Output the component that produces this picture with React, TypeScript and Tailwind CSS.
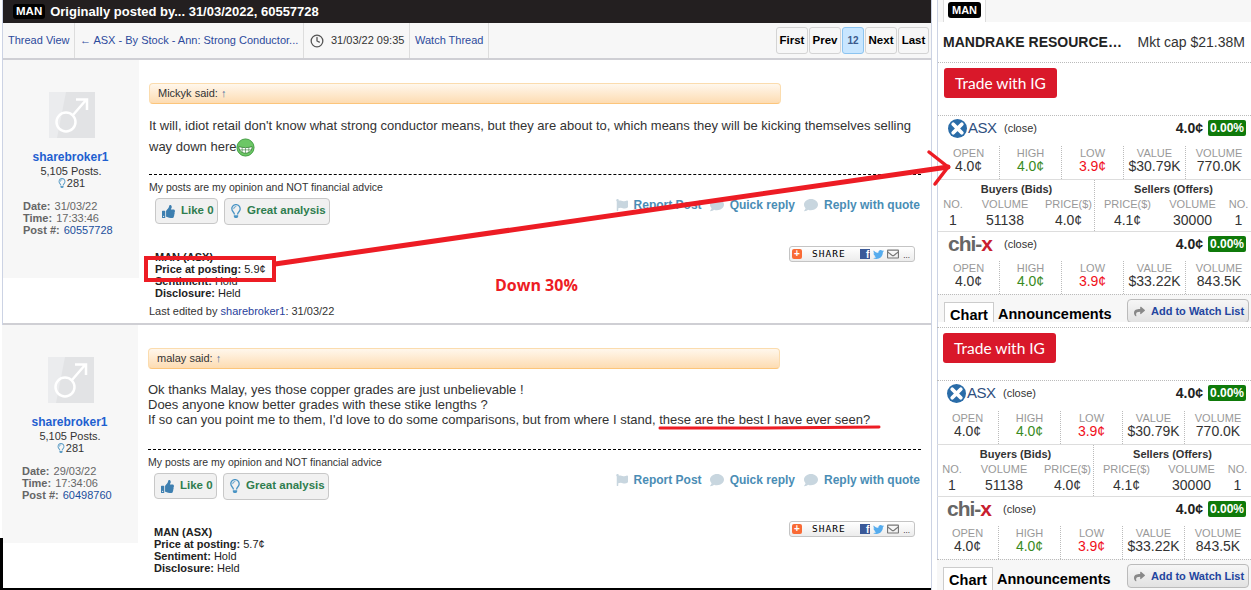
import { FaThumbsUp, FaRegLightbulb, FaFlag, FaComment, FaShare, FaTwitter, FaRegEnvelope } from 'react-icons/fa';
import { Clock } from 'lucide-react';

const arial = "font-['Liberation_Sans',Arial,sans-serif]";

function Avatar() {
  return (
    <svg viewBox="0 0 46 46" className="w-[46px] h-[46px]">
      <rect width="46" height="46" fill="#e2e3e5" />
      <path d="M0 0H17L8 46H0Z" fill="#ebecee" />
      <circle cx="17" cy="30" r="9.5" fill="none" stroke="#fff" strokeWidth="2.5" />
      <path d="M24 23L37 8M27 7.5H38V18" fill="none" stroke="#fff" strokeWidth="2.5" />
    </svg>
  );
}

function ShareBar() {
  return (
    <div className="w-[126px] h-4 flex items-center rounded-[3px] border border-[#c4c4c4] bg-gradient-to-b from-white to-[#ececec] pl-[2px] pr-1">
      <span className="w-[10px] h-[10px] bg-[#f96a35] rounded-[2px] text-white text-[10px] leading-[10px] font-bold text-center">+</span>
      <span className="ml-[10px] text-[9.5px] tracking-[1px] text-black font-['DejaVu_Sans_Mono',monospace]">SHARE</span>
      <span className="ml-auto w-[10px] h-[10px] bg-[#3b5998] text-white text-[10px] leading-[11px] font-bold text-right pr-[1px]">f</span>
      <FaTwitter className="ml-[3px] text-[#55acee] text-[11px]" />
      <FaRegEnvelope className="ml-[3px] text-[#777] text-[12px]" />
      <span className="ml-1 text-[8px] leading-[8px] mt-1 text-black">...</span>
    </div>
  );
}

interface PostProps {
  quoteName: string;
  date: string;
  time: string;
  postNo: string;
  price: string;
  shifted?: boolean;
  body: React.ReactNode;
  edited?: boolean;
}

function Post({ quoteName, date, time, postNo, price, body, edited, shifted }: PostProps) {
  return (
    <div className={`flex ${shifted ? 'h-[264px] -ml-px' : 'h-[265px] border-b-2 border-[#cfcfd4]'}`}>
      <div className="w-[136px] h-[218px] shrink-0 bg-[#f7f7f7] pt-[32px] flex flex-col">
        <div className="ml-[46px]"><Avatar /></div>
        <div className="mt-[12px] text-center pr-[1px] text-[12px] leading-[14px] font-bold text-[#1f5fd0]">sharebroker1</div>
        <div className="mt-[1px] text-center text-[11px] leading-[12px] text-[#333]">5,105 Posts.</div>
        <div className="flex items-center justify-center text-[11px] leading-[12px] text-[#333]">
          <FaRegLightbulb className="text-[#5b9cc5] text-[10px]" />281
        </div>
        <div className="mt-[11px] ml-[20px] text-[11px] leading-[12px] text-[#666] font-bold [&>div]:flex [&>div]:gap-[4px] [&_span]:font-normal">
          <div>Date: <span>{date}</span></div>
          <div>Time: <span>{time}</span></div>
          <div>Post #: <span className="text-[#1b4f9c]">{postNo}</span></div>
        </div>
      </div>
      <div className="flex-1 pl-[10px] pr-[10px] flex flex-col">
        <div className="mt-[23px] w-[632px] h-[21px] rounded-[4px] border border-[#fbdcae] border-b-[#fcc57b] bg-gradient-to-b from-[#fff7ec] to-[#fddcb2] pl-[8px] text-[11px] leading-[19px] text-[#333]">
          {quoteName} said: <span className="text-[#4d6f9c]">↑</span>
        </div>
        {body}
        <div className="border-t border-dashed border-black" />
        <div className="mt-[6px] text-[10.5px] leading-[12px] text-[#333]">My posts are my opinion and NOT financial advice</div>
        <div className="mt-[5px] flex items-center h-[26px]">
          <div className="ml-[6px] w-[63px] h-[26px] rounded-[4px] border border-[#c8c8c8] bg-[#f1f1f1] flex items-center pl-[6px] text-[11.5px] whitespace-nowrap font-bold text-[#2f7d4f]">
            <FaThumbsUp className="text-[#3d7fb0] text-[13px] mr-[6px]" />Like 0
          </div>
          <div className="ml-[6px] w-[106px] h-[27px] rounded-[4px] border border-[#c8c8c8] bg-[#f1f1f1] flex items-center pl-[4px] text-[11.5px] whitespace-nowrap font-bold text-[#2f7d4f]">
            <FaRegLightbulb className="text-[#4a94c4] text-[14px] mr-[4px]" />Great analysis
          </div>
          <div className="ml-auto mb-[12px] flex items-center text-[12px] font-bold text-[#4a8db5] mr-[1px]">
            <FaFlag className="text-[#c8d6df] text-[12px] mr-[6px]" />Report Post
            <FaComment className="ml-[8px] mr-[6px] text-[#c8d6df] text-[14px]" />Quick reply
            <FaComment className="ml-[9px] mr-[6px] text-[#c8d6df] text-[14px]" />Reply with quote
          </div>
        </div>
        <div className="mt-[27px] flex pr-[6px]">
          <div className="ml-[6px] text-[11px] leading-[12px] text-[#222] [&_b]:font-bold">
            <b>MAN (ASX)</b><br />
            <b>Price at posting:</b> {price}<br />
            <b>Sentiment:</b> Hold<br />
            <b>Disclosure:</b> Held
          </div>
          <div className="ml-auto -mt-[5px]"><ShareBar /></div>
        </div>
        {edited && (
          <div className="mt-[6px] text-[11px] leading-[13px] text-[#333]">
            Last edited by <span className="text-[#2a3f9c]">sharebroker1</span>: 31/03/22
          </div>
        )}
      </div>
    </div>
  );
}

function StatCols({ values }: { values: string[] }) {
  const labels = ['OPEN', 'HIGH', 'LOW', 'VALUE', 'VOLUME'];
  const colors = ['text-[#333]', 'text-[#3a8a1e]', 'text-[#f01020]', 'text-[#333]', 'text-[#333]'];
  return (
    <div className="grid grid-cols-[62px_62px_62px_62px_66px] h-[33px] text-center">
      {labels.map((l, i) => (
        <div key={l} className={i < 4 ? 'border-r border-dotted border-[#bbb]' : ''}>
          <div className="text-[11px] leading-[12px] mt-[1px] text-[#999]">{l}</div>
          <div className={`text-[14px] leading-[15px] ${colors[i]}`}>{values[i]}</div>
        </div>
      ))}
    </div>
  );
}

function QuoteHead({ logo }: { logo: React.ReactNode }) {
  return (
    <div className="h-[24px] flex items-center pl-[10px] pr-[5px] relative">
      <div className="w-[56px] flex items-center">{logo}</div>
      <span className="text-[11px] text-[#333]">(close)</span>
      <span className="ml-auto text-[14px] font-bold text-[#222]">4.0¢</span>
      <span className="ml-[5px] w-[38px] h-[16px] rounded-[2px] bg-[#0f7a0a] text-white text-[12px] leading-[16px] font-bold text-center">0.00%</span>
    </div>
  );
}

function StockPanel() {
  return (
    <div className="border-t border-dotted border-[#bbb]">
      <div className="h-[52px] pt-[5px] pl-[6px]">
        <div className="w-[113px] h-[30px] bg-[#d9182a] rounded-[3px] text-white text-[15.5px] leading-[30px] text-center font-['Lato',sans-serif]">Trade with IG</div>
      </div>
      <div className="border-t border-dotted border-[#bbb]">
        <QuoteHead
          logo={
            <>
              <svg viewBox="0 0 20 20" className="w-[19px] h-[19px]">
                <circle cx="10" cy="10" r="10" fill="#2a6ca8" />
                <path d="M5.5 5.5L14.5 14.5M14.5 5.5L5.5 14.5" stroke="#fff" strokeWidth="4" strokeLinecap="round" />
              </svg>
              <span className="text-[15px] tracking-[-.5px] text-[#2f4f80] ml-[1px]">ASX</span>
            </>
          }
        />
      </div>
      <div className="mt-[6px]"><StatCols values={['4.0¢', '4.0¢', '3.9¢', '$30.79K', '770.0K']} /></div>
      <div className="border-t border-[#ddd] grid grid-cols-[157px_157px] h-[52px]">
        <div className="border-r border-dotted border-[#bbb] grid grid-cols-[30px_74px_53px] grid-rows-[18px_12px_20px] text-center">
          <div className="col-span-3 text-[11px] leading-[18px] font-bold text-[#333]">Buyers (Bids)</div>
          <div className="text-[11px] text-[#999] leading-[12px]">NO.</div>
          <div className="text-[11px] text-[#999] leading-[12px]">VOLUME</div>
          <div className="text-[11px] text-[#999] leading-[12px]">PRICE($)</div>
          <div className="text-[14px] leading-[20px] text-[#333]">1</div>
          <div className="text-[14px] leading-[20px] text-[#333]">51138</div>
          <div className="text-[14px] leading-[20px] text-[#333]">4.0¢</div>
        </div>
        <div className="grid grid-cols-[65px_65px_27px] grid-rows-[18px_12px_20px] text-center">
          <div className="col-span-3 text-[11px] leading-[18px] font-bold text-[#333]">Sellers (Offers)</div>
          <div className="text-[11px] text-[#999] leading-[12px]">PRICE($)</div>
          <div className="text-[11px] text-[#999] leading-[12px]">VOLUME</div>
          <div className="text-[11px] text-[#999] leading-[12px]">NO.</div>
          <div className="text-[14px] leading-[20px] text-[#333]">4.1¢</div>
          <div className="text-[14px] leading-[20px] text-[#333]">30000</div>
          <div className="text-[14px] leading-[20px] text-[#333]">1</div>
        </div>
      </div>
      <div className="border-t border-[#ddd]">
        <QuoteHead
          logo={
            <span className="text-[21px] leading-[20px] font-bold tracking-[-1px] text-[#666]">chi-<span className="text-[#c8202f]">x</span></span>
          }
        />
      </div>
      <div className="mt-[5px]"><StatCols values={['4.0¢', '4.0¢', '3.9¢', '$33.22K', '843.5K']} /></div>
      <div className="border-t border-dotted border-[#bbb] h-[33px] bg-[#f7f7f7] flex pl-[6px] pr-[2px]">
        <div className="mt-[7px] w-[50px] h-[26px] border border-[#ccc] border-b-0 bg-white text-center text-[14.5px] leading-[24px] font-bold text-black">Chart</div>
        <div className="mt-[7px] ml-[4px] text-[14.5px] leading-[24px] font-bold text-black">Announcements</div>
        <div className="ml-auto mt-[4px] w-[122px] h-[24px] rounded-[4px] border border-[#bbb] bg-gradient-to-b from-[#f6f6f6] to-[#e2e2e2] flex items-center pl-[6px] text-[11px] font-bold text-[#23459f]">
          <FaShare className="text-[#888] text-[11px] mr-[6px]" />Add to Watch List
        </div>
      </div>
    </div>
  );
}

export default function App() {
  return (
    <div className={`${arial} relative w-[1251px] h-[590px] overflow-hidden bg-white flex`}>
      <div className="ml-[2px] w-[930px] shrink-0 border-x border-[#ccd3e4] flex flex-col">
        <div className="h-[23px] bg-[#231f20] flex items-center text-white">
          <span className="ml-[10px] bg-black rounded-[3px] px-[3px] text-[11.5px] leading-[15px] font-bold">MAN</span>
          <span className="ml-[5px] text-[13px] font-bold">Originally posted by... 31/03/2022, 60557728</span>
        </div>
        <div className="h-[37px] bg-[#f7f7f7] border-b-2 border-[#cfcfd4] flex items-stretch text-[11px]">
          <div className="w-[72px] border-r border-[#ddd] flex items-center pl-[5px] text-[#2c4a9c]">Thread View</div>
          <div className="w-[229px] border-r border-[#ddd] flex items-center pl-[5px] text-[#2c4a9c]">← ASX - By Stock - Ann: Strong Conductor...</div>
          <div className="w-[106px] border-r border-[#ddd] flex items-center pl-[6px] text-[#333]">
            <Clock className="w-[14px] h-[14px] text-[#555] mr-[7px]" strokeWidth={2.2} />31/03/22 09:35
          </div>
          <div className="w-[79px] border-r border-[#ddd] flex items-center pl-[5px] text-[#2c4a9c]">Watch Thread</div>
          <div className="ml-auto mr-[2px] flex items-start gap-[1px] pt-[4px] font-bold text-[11.5px] text-black [&>div]:h-[27px] [&>div]:flex [&>div]:items-center [&>div]:justify-center [&>div]:rounded-[3px] [&>div]:border [&>div]:border-[#d4d4d4]">
            <div className="w-[32px]">First</div>
            <div className="w-[32px]">Prev</div>
            <div className="w-[22px] !border-[#8cc4f0] bg-[#c8e6ff] text-[#3b5a8c] text-[10px]">12</div>
            <div className="w-[32px]">Next</div>
            <div className="w-[31px]">Last</div>
          </div>
        </div>
        <Post
          quoteName="Mickyk"
          date="31/03/22"
          time="17:33:46"
          postNo="60557728"
          price="5.9¢"
          edited
          body={
            <div className="mt-[11px] h-[59px] text-[13px] leading-[21px] text-[#333]">
              It will, idiot retail don't know what strong conductor means, but they are about to, which means they will be kicking themselves selling way down here
              <svg viewBox="0 0 20 20" className="inline w-[19px] h-[19px] align-[-2px] my-[-4px]">
                <circle cx="10" cy="10" r="9" fill="#6cc765" stroke="#3c9a3c" />
                <path d="M3 9C7 10.5 13 10.5 17 9C17 13 14 16 10 16C6 16 3 13 3 9Z" fill="#fff" stroke="#2f7a2f" strokeWidth=".8" />
                <path d="M6.5 10v5M10 10.5v5.5M13.5 10v5M3.5 12.5h13" stroke="#2f7a2f" strokeWidth=".6" />
              </svg>
            </div>
          }
        />
        <Post
          shifted
          quoteName="malay"
          date="29/03/22"
          time="17:34:06"
          postNo="60498760"
          price="5.7¢"
          body={
            <div className="mt-[13px] h-[67px] text-[13px] leading-[15px] text-[#333]">
              Ok thanks Malay, yes those copper grades are just unbelievable !<br />
              Does anyone know better grades with these stike lengths ?<br />
              If so can you point me to them, I'd love to do some comparisons, but from where I stand, these are the best I have ever seen?
            </div>
          }
        />
      </div>

      <div className="ml-[5px] w-[314px] border-l border-[#ccd3e4]">
        <div className="h-[22px] bg-[#f7f7f7] pl-[5px]">
          <div className="w-[43px] h-[22px] bg-white border-x border-[#ddd] pl-[4px] pt-[2px]">
            <span className="block w-[33px] h-[16px] bg-black rounded-[3px] text-white text-[11px] leading-[16px] font-bold text-center">MAN</span>
          </div>
        </div>
        <div className="h-[40px] pl-[5px] pr-[6px] flex items-center text-[14px]">
          <span className="font-bold text-[#222] whitespace-nowrap">MANDRAKE RESOURCE…</span>
          <span className="ml-auto text-[#333]">Mkt cap $21.38M</span>
        </div>
        <div className="h-[260px] overflow-hidden"><StockPanel /></div>
        <div className="h-[5px]" />
        <div className="-ml-px"><StockPanel /></div>
      </div>

      {/* annotations drawn on top of the page */}
      <div className="absolute left-[144px] top-[256px] w-[132px] h-[26px] border-4 border-[#ed1c24]" />
      <div className="absolute left-[495px] top-[275px] text-[16px] leading-[20px] font-bold text-[#ed1c24] font-['Open_Sans',sans-serif]">Down 30%</div>
      <svg className="absolute left-0 top-0 pointer-events-none" width="1251" height="590" fill="none" stroke="#ed1c24" strokeLinecap="round">
        <path d="M275 264L948 167" strokeWidth="5" />
        <path d="M929 152L948 167L935 184" strokeWidth="3.5" />
        <path d="M660 428C730 428 810 428 879 427" strokeWidth="3" />
      </svg>
      <div className="absolute left-0 top-[538px] w-[3px] h-[52px] bg-black" />
      <div className="absolute left-0 top-[588px] w-[931px] h-[2px] bg-black" />
    </div>
  );
}
